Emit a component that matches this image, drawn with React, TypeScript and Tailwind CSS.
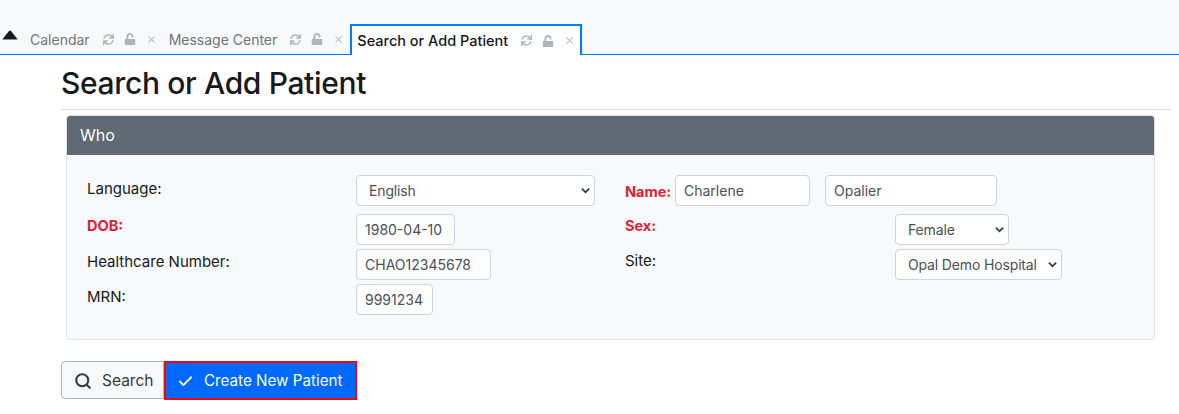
import React from 'react';
import { FaSync, FaUnlock } from 'react-icons/fa';
import { Search, Check, X } from 'lucide-react';

const font = "font-['Inter','Liberation_Sans',sans-serif]";

const TabIcons = () => (
    <span className="flex items-center text-[#adb5bd]">
        <FaSync className="w-[11px] h-[11px]" />
        <FaUnlock className="w-[12px] h-[12px] ml-[10px]" />
        <X className="w-[11px] h-[11px] ml-[10px]" strokeWidth={2.25} />
    </span>
);

const Field = ({ value, width }: { value: string; width: string }) => (
    <input
        readOnly
        value={value}
        className={`${width} h-[31px] px-2 bg-white border border-[#ced4da] rounded-[4px] text-[14px] text-[#495057] outline-none`}
    />
);

const Dropdown = ({ value, width }: { value: string; width: string }) => (
    <div className={`relative ${width} h-[31px]`}>
        <select className="w-full h-full pl-3 tracking-[-0.15px] appearance-none bg-white border border-[#ced4da] rounded-[4px] text-[14px] text-[#495057] outline-none">
            <option>{value}</option>
        </select>
        <svg viewBox="0 0 10 7" className="absolute right-[5px] top-[12px] w-[9px] h-[7px] text-[#343a40]">
            <path d="M1 1.5 L5 5.5 L9 1.5" fill="none" stroke="currentColor" strokeWidth="2" />
        </svg>
    </div>
);

const Label = ({ children, required }: { children: React.ReactNode; required?: boolean }) =>
    required ? (
        <span className="text-[14.5px] leading-[20px] font-bold text-[#dc2238]">{children}</span>
    ) : (
        <span className="text-[15px] leading-[22px] text-[#17191c]">{children}</span>
    );

export default function App() {
    return (
        <div className={`${font} w-[1179px] h-[414px] bg-white overflow-hidden`}>
            {/* tab bar */}
            <div className="relative h-[55px] bg-[#f8f9fa] border-b border-[#007bff] flex items-end">
                <svg viewBox="0 0 16 10" className="absolute left-[2px] top-[30px] w-[16px] h-[10px] text-[#17191c]">
                    <path d="M1 9.5 Q0 9.5 1 8.5 L7 1 Q8 0 9 1 L15 8.5 Q16 9.5 15 9.5 Z" fill="currentColor" />
                </svg>
                <div className="flex items-center h-[30px] ml-[30px] text-[14px] text-[#6c757d]">
                    <span>Calendar</span>
                    <span className="ml-[13px]"><TabIcons /></span>
                </div>
                <div className="flex items-center h-[30px] ml-[12px] text-[14px] text-[#6c757d]">
                    <span>Message Center</span>
                    <span className="ml-[13px]"><TabIcons /></span>
                </div>
                <div className="flex items-center justify-between h-[31px] w-[232px] ml-[6px] -mb-px pl-[5px] pr-[5px] bg-white border-x-2 border-t-2 border-[#007bff] text-[14.5px] font-medium text-[#17191c]">
                    <span>Search or Add Patient</span>
                    <TabIcons />
                </div>
            </div>

            <div className="ml-[61px] w-[1110px]">
                <h1 className="h-[55px] pt-[9px] text-[30px] leading-[38px] tracking-[-0.35px] font-medium text-[#17191c] border-b border-[#dee2e6]">
                    Search or Add Patient
                </h1>

                {/* who card */}
                <div className="ml-[5px] mt-[5px] w-[1089px] h-[225px] bg-[#f8f9fa] border border-[#dfe1e4] rounded-[4px] overflow-hidden">
                    <div className="h-[39px] px-[13px] pb-[2px] flex items-center bg-[#5f6a72] text-white text-[16px]">Who</div>
                    <div className="pl-[20px] pt-[20px] grid grid-cols-[269px_269px_270px_1fr] grid-rows-[30px_31px_31px_31px] gap-y-[4px]">
                        <span className="mt-[1px]"><Label>Language:</Label></span>
                        <Dropdown value="English" width="w-[239px]" />
                        <div className="col-span-2 flex items-start">
                            <span className="w-[50px] pt-[4px]"><Label required>Name:</Label></span>
                            <Field value="Charlene" width="w-[135px]" />
                            <span className="ml-[15px]"><Field value="Opalier" width="w-[172px]" /></span>
                        </div>

                        <span className="mt-[4px]"><Label required>DOB:</Label></span>
                        <span className="mt-[5px]"><Field value="1980-04-10" width="w-[99px]" /></span>
                        <span className="mt-[4px]"><Label required>Sex:</Label></span>
                        <span className="mt-[5px]"><Dropdown value="Female" width="w-[114px]" /></span>

                        <span className="mt-[5px]"><Label>Healthcare Number:</Label></span>
                        <span className="mt-[5px]"><Field value="CHAO12345678" width="w-[135px]" /></span>
                        <span className="mt-[4px]"><Label>Site:</Label></span>
                        <span className="mt-[5px]"><Dropdown value="Opal Demo Hospital" width="w-[167px]" /></span>

                        <span className="mt-[5px]"><Label>MRN:</Label></span>
                        <span className="mt-[5px]"><Field value="9991234" width="w-[77px]" /></span>
                    </div>
                </div>

                {/* actions */}
                <div className="mt-[21px] flex items-start">
                    <button className="flex items-center w-[103px] h-[38px] pl-[12px] pt-[1px] bg-[#f8f9fa] border border-[#adb5bd] rounded-l-[4px] text-[15.5px] text-[#343a40]">
                        <Search className="w-[18px] h-[18px]" strokeWidth={2.75} />
                        <span className="ml-[10px]">Search</span>
                    </button>
                    <button className="flex items-center w-[193px] h-[39px] pl-[11px] pt-[1px] bg-[#0069ff] border-2 border-[#ff0000] text-[15.2px] text-white">
                        <Check className="w-[17px] h-[17px]" strokeWidth={2.5} />
                        <span className="ml-[10px]">Create New Patient</span>
                    </button>
                </div>
            </div>
        </div>
    );
}
